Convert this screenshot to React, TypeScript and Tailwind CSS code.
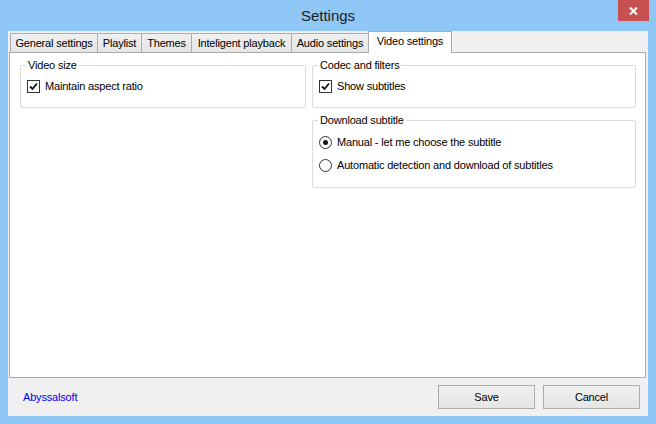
import React from "react";

const font = { fontFamily: '"Liberation Sans", Arial, sans-serif' };

const tabs = [
  { label: "General settings", w: "w-[88px]" },
  { label: "Playlist", w: "w-[45px]" },
  { label: "Themes", w: "w-[51px]" },
  { label: "Inteligent playback", w: "w-[101px]" },
  { label: "Audio settings", w: "w-[78px]" },
];

const CheckBox = ({ label }: { label: string }) => (
  <div className="flex items-center gap-[5px] h-[13px]">
    <span className="w-[13px] h-[13px] border border-[#333] bg-white flex items-center justify-center">
      <svg width="9" height="9" viewBox="0 0 9 9">
        <path d="M1 4.5 L3.5 7 L8 1.5" fill="none" stroke="#111" strokeWidth="1.8" />
      </svg>
    </span>
    <span className="text-[11px] leading-[13px] text-black">{label}</span>
  </div>
);

const Radio = ({ label, checked }: { label: string; checked?: boolean }) => (
  <div className="flex items-center gap-[5px] h-[13px]">
    <span className="w-[13px] h-[13px] rounded-full border border-[#333] bg-white flex items-center justify-center">
      {checked && <span className="w-[5px] h-[5px] rounded-full bg-[#111]" />}
    </span>
    <span className="text-[11px] leading-[13px] text-black">{label}</span>
  </div>
);

const Group = ({ title, className, children }: { title: string; className: string; children: React.ReactNode }) => (
  <fieldset className={`border border-[#dcdcdc] rounded-[2px] pl-[6px] ${className}`}>
    <legend className="-ml-px px-[2px] text-[11px] leading-[14px] text-black">{title}</legend>
    {children}
  </fieldset>
);

export default function App() {
  return (
    <div className="w-[656px] h-[424px] bg-[#8ec6f6] flex flex-col tracking-[-0.18px]" style={font}>
      <div className="h-[31px] grid grid-cols-[1fr_auto_1fr]">
        <div />
        <div className="text-[15px] leading-[31px] tracking-normal text-[#1e1e1e]">Settings</div>
        <div className="flex justify-end pr-[7px]">
          <div className="w-[31px] h-[21px] bg-[#c75050] flex items-center justify-center">
            <svg width="9" height="8" viewBox="0 0 9 8">
              <path d="M1 0.5 L8 7.5 M8 0.5 L1 7.5" stroke="#fff" strokeWidth="2" />
            </svg>
          </div>
        </div>
      </div>
      <div className="mx-[8px] mb-[8px] flex-1 bg-[#f0f0f0] flex flex-col">
        <div className="ml-[1px] mr-[2px] flex flex-col">
          <div className="h-[21px] flex items-end pl-[1px]">
            {tabs.map((t) => (
              <div
                key={t.label}
                className={`${t.w} h-[19px] -mr-px border border-b-0 border-[#acacac] bg-gradient-to-b from-[#f0f0f0] to-[#e5e5e5] text-[11px] leading-[18px] text-center text-black`}
              >
                {t.label}
              </div>
            ))}
            <div className="w-[84px] h-[22px] -mb-px relative z-10 border border-b-0 border-[#acacac] bg-white text-[11px] leading-[19px] text-center text-black">
              Video settings
            </div>
          </div>
          <div className="h-[326px] border border-[#acacac] bg-white pt-[5px] pl-[10px] pr-[9px] grid grid-cols-[286px_1fr] gap-x-[6px] items-start">
            <Group title="Video size" className="h-[50px] pt-[8px]">
              <CheckBox label="Maintain aspect ratio" />
            </Group>
            <div className="flex flex-col gap-[5px]">
              <Group title="Codec and filters" className="h-[50px] pt-[8px]">
                <CheckBox label="Show subtitles" />
              </Group>
              <Group title="Download subtitle" className="h-[75px] pt-[9px]">
                <div className="flex flex-col gap-[10px]">
                  <Radio label="Manual - let me choose the subtitle" checked />
                  <Radio label="Automatic detection and download of subtitles" />
                </div>
              </Group>
            </div>
          </div>
        </div>
        <div className="flex-1 flex items-center pl-[15px] pr-[8px]">
          <a className="text-[11px] text-[#0000ff] cursor-pointer">Abyssalsoft</a>
          <div className="ml-auto flex gap-[8px]">
            <button className="w-[97px] h-[24px] border border-[#acacac] bg-gradient-to-b from-[#f0f0f0] to-[#e5e5e5] text-[11px] text-black">
              Save
            </button>
            <button className="w-[97px] h-[24px] border border-[#acacac] bg-gradient-to-b from-[#f0f0f0] to-[#e5e5e5] text-[11px] text-black">
              Cancel
            </button>
          </div>
        </div>
      </div>
    </div>
  );
}
